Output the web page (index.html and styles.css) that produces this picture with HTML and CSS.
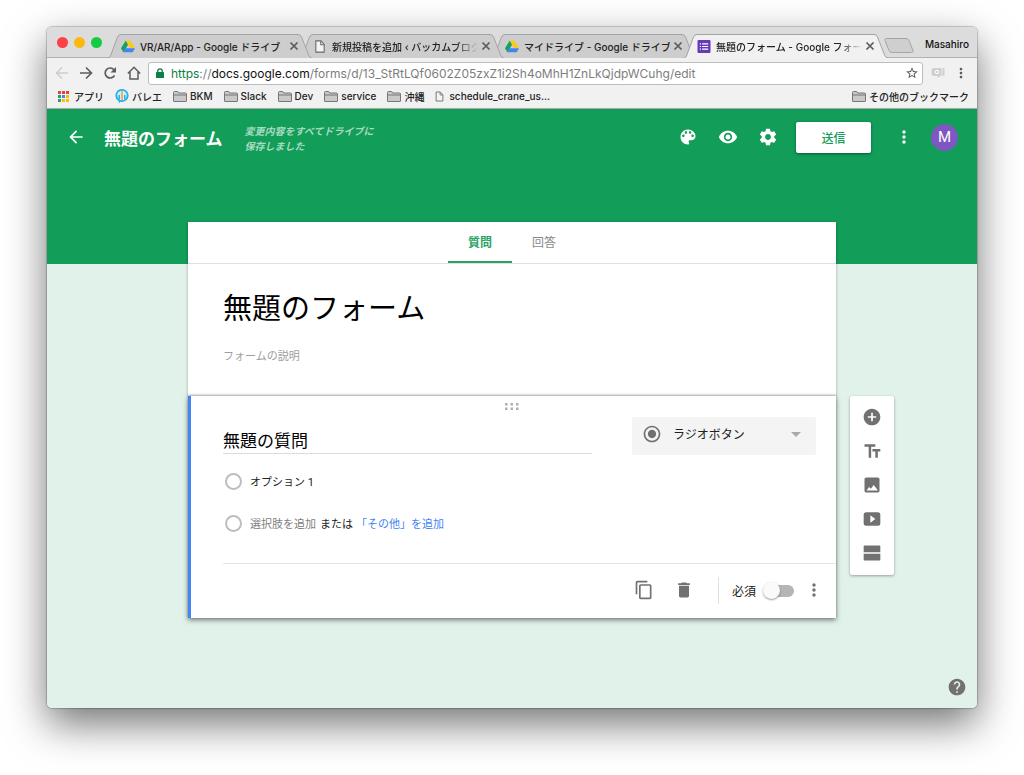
FILE: index.html
```html
<!DOCTYPE html>
<html lang="ja">
<head>
<meta charset="utf-8">
<meta name="viewport" content="width=device-width, initial-scale=1">
<title>無題のフォーム - Google フォーム</title>
<link rel="stylesheet" href="styles.css">
</head>
<body>
<svg class="defs" aria-hidden="true">
  <symbol id="drive" viewBox="0 0 24 22">
    <path fill="#ffc913" d="M8 1h8l8 13h-8z"/>
    <path fill="#17a05d" d="M8 1l4 7L4 21 0 14z"/>
    <path fill="#3f85f4" d="M8 14h16l-4 7H4z"/>
  </symbol>
  <symbol id="page" viewBox="0 0 12 14">
    <path fill="#f4f4f4" stroke="#6b6b6b" stroke-width="1.2" d="M1.5 1h5.500l3.500 3.700V13h-9z"/>
    <path fill="none" stroke="#6b6b6b" stroke-width="1.100" d="M6.800 1v4h3.700"/>
  </symbol>
  <symbol id="folder" viewBox="0 0 14 11">
    <path fill="#c9c9c9" stroke="#777" d="M.5 10V1.500q0-1 1-1h3.200l1 1.500h6.800q1 0 1 1v7q0 .5-.5.500H1q-.5 0-.5-.5z"/>
    <path stroke="#777" d="M.5 4h13"/>
  </symbol>
  <symbol id="close" viewBox="0 0 10 10">
    <path stroke="#5a5a5a" stroke-width="1.700" d="M1.500 1.500l7 7m0-7l-7 7"/>
  </symbol>
  <symbol id="more" viewBox="0 0 24 24">
    <path d="M12 8c1.100 0 2-.9 2-2s-.9-2-2-2-2 .9-2 2 .9 2 2 2zm0 2c-1.100 0-2 .9-2 2s.9 2 2 2 2-.9 2-2-.9-2-2-2zm0 6c-1.100 0-2 .9-2 2s.9 2 2 2 2-.9 2-2-.9-2-2-2z"/>
  </symbol>
  <symbol id="tab-shape" viewBox="0 0 204 24" preserveAspectRatio="none">
    <path d="M0 24Q2 23.500 2.500 22L9.500 3Q10.500.5 13 .5H190Q192.500.5 193.500 3L201 22Q202 23.500 204 24"/>
  </symbol>
</svg>

<div class="window">
  <header class="tabstrip">
    <div class="lights">
      <button class="light red" aria-label="閉じる"></button>
      <button class="light yellow" aria-label="最小化"></button>
      <button class="light green" aria-label="最大化"></button>
    </div>
    <nav class="tabs">
      <div class="tab tab-1">
        <svg class="tab-bg"><use href="#tab-shape"/></svg>
        <svg class="favicon"><use href="#drive"/></svg>
        <span class="tab-title">VR/AR/App - Google ドライブ</span>
        <button class="tab-close" aria-label="タブを閉じる"><svg><use href="#close"/></svg></button>
      </div>
      <div class="tab tab-2">
        <svg class="tab-bg"><use href="#tab-shape"/></svg>
        <svg class="favicon"><use href="#page"/></svg>
        <span class="tab-title fade">新規投稿を追加 ‹ バッカムブログ -</span>
        <button class="tab-close" aria-label="タブを閉じる"><svg><use href="#close"/></svg></button>
      </div>
      <div class="tab tab-3">
        <svg class="tab-bg"><use href="#tab-shape"/></svg>
        <svg class="favicon"><use href="#drive"/></svg>
        <span class="tab-title">マイドライブ - Google ドライブ</span>
        <button class="tab-close" aria-label="タブを閉じる"><svg><use href="#close"/></svg></button>
      </div>
      <div class="tab active">
        <svg class="tab-bg"><use href="#tab-shape"/></svg>
        <svg class="favicon" viewBox="0 0 14 14"><rect width="14" height="14" rx="1" fill="#673ab7"/><path stroke="#fff" stroke-width="1.300" d="M2.500 4.200h1.300M2.500 7h1.300M2.500 9.800h1.300M5 4.200h6.500M5 7h6.500M5 9.800h6.500"/></svg>
        <span class="tab-title fade">無題のフォーム - Google フォーム</span>
        <button class="tab-close" aria-label="タブを閉じる"><svg><use href="#close"/></svg></button>
      </div>
    </nav>
    <button class="new-tab" aria-label="新しいタブ"><svg viewBox="0 0 30 15"><path fill="#cfcfcf" stroke="#a5a5a5" d="M2.500.5H22q2 0 3 2l4 10q.5 2-1.500 2H8q-2 0-3-2L1 2.500Q.5.5 2.500.5z"/></svg></button>
    <button class="profile">Masahiro</button>
  </header>

  <div class="toolbar">
    <button class="nav-btn" aria-label="戻る"><svg viewBox="0 0 14 14"><path fill="none" stroke="#cdcdcd" stroke-width="1.500" d="M13 7H2M7 1.500L1.500 7 7 12.500"/></svg></button>
    <button class="nav-btn" aria-label="進む"><svg viewBox="0 0 14 14"><path fill="none" stroke="#5c5c5c" stroke-width="1.600" d="M1 7h11M7 1.500L12.500 7 7 12.500"/></svg></button>
    <button class="nav-btn" aria-label="再読み込み"><svg viewBox="0 0 14 14"><path fill="none" stroke="#5c5c5c" stroke-width="1.700" d="M11.500 9.500A5 5 0 1 1 11 3.800"/><path fill="#5c5c5c" d="M13 1v5.500H7.500z"/></svg></button>
    <button class="nav-btn" aria-label="ホーム"><svg viewBox="0 0 14 14"><path fill="none" stroke="#5c5c5c" stroke-width="1.500" d="M.8 7.500L7 1.300l6.200 6.200M3 6v7h8V6"/></svg></button>
    <div class="omnibox">
      <svg class="lock" viewBox="0 0 8 10"><rect y="4" width="8" height="6" rx=".6" fill="#0b8043"/><path fill="none" stroke="#0b8043" stroke-width="1.300" d="M1.800 4.500V3a2.200 2.200 0 0 1 4.400 0v1.500"/></svg>
      <div class="url"><span class="secure">https</span>://<span class="host">docs.google.com</span>/forms/d/13_StRtLQf0602Z05zxZ1i2Sh4oMhH1ZnLkQjdpWCuhg/edit</div>
      <button class="star" aria-label="ブックマーク"><svg viewBox="0 0 24 24"><path fill="#5a5a5a" d="M22 9.240l-7.190-.62L12 2 9.190 8.630 2 9.240l5.460 4.730L5.820 21 12 17.270 18.180 21l-1.630-7.030L22 9.240zM12 15.400l-3.760 2.270 1-4.280-3.320-2.880 4.380-.38L12 6.100l1.710 4.040 4.380.38-3.320 2.880 1 4.280L12 15.400z"/></svg></button>
    </div>
    <button class="ext" aria-label="拡張機能"><svg viewBox="0 0 14 12"><path fill="#d0d0d0" d="M3 1h9q1.500 0 1.500 1.500v5Q13.500 9 12 9H9l-2 2-1-2H3Q.5 9 .5 6.500v-3Q.5 1 3 1z"/><circle cx="6" cy="5" r="1.700" fill="none" stroke="#fff" stroke-width="1"/><path stroke="#f1f1f1" stroke-width=".8" d="M11 1v8"/></svg></button>
    <button class="menu" aria-label="メニュー"><svg viewBox="0 0 24 24"><use href="#more"/></svg></button>
  </div>

  <nav class="bookmarks">
    <a href="#"><svg class="apps" viewBox="0 0 11 11"><path fill="#e8443a" d="M0 0h3v3H0zM4 0h3v3H4zM8 0h3v3H8z"/><path fill="#1fa463" d="M0 4h3v3H0z"/><path fill="#4285f4" d="M4 4h3v3H4z"/><path fill="#fbbc05" d="M8 4h3v3H8zM4 8h3v3H4zM8 8h3v3H8z"/><path fill="#1fa463" d="M0 8h3v3H0z"/></svg>アプリ</a>
    <a href="#"><svg class="ballet" viewBox="0 0 14 14"><path fill="#25b0ea" d="M7 0a6.500 6.500 0 1 1-1.500 12.800L4 14l-.5-2A6.500 6.500 0 0 1 7 0z"/><circle cx="7" cy="6.500" r="4.800" fill="#d3edf8"/><path fill="#f4a340" d="M6.200 4h1.600v7H6.200z"/><path fill="#25b0ea" d="M3.500 6H5v4.500H3.500zM9 6h1.500v4.500H9z"/><circle cx="7" cy="3" r="1" fill="#f4a340"/></svg>バレエ</a>
    <a href="#"><svg class="folder"><use href="#folder"/></svg>BKM</a>
    <a href="#"><svg class="folder"><use href="#folder"/></svg>Slack</a>
    <a href="#"><svg class="folder"><use href="#folder"/></svg>Dev</a>
    <a href="#"><svg class="folder"><use href="#folder"/></svg>service</a>
    <a href="#"><svg class="folder"><use href="#folder"/></svg>沖縄</a>
    <a href="#"><svg class="file"><use href="#page"/></svg>schedule_crane_us...</a>
    <a href="#" class="other"><svg class="folder"><use href="#folder"/></svg>その他のブックマーク</a>
  </nav>

  <main class="app">
    <div class="appbar">
      <button class="icon-btn back" aria-label="戻る"><svg viewBox="0 0 24 24"><path d="M20 11H7.830l5.590-5.590L12 4l-8 8 8 8 1.410-1.410L7.830 13H20v-2z"/></svg></button>
      <h1 class="doc-name">無題のフォーム</h1>
      <p class="saved">変更内容をすべてドライブに保存しました</p>
      <div class="actions">
        <button class="icon-btn" aria-label="カラーパレット"><svg viewBox="0 0 24 24"><path d="M12 3c-4.970 0-9 4.030-9 9s4.030 9 9 9c.83 0 1.500-.67 1.500-1.500 0-.39-.15-.74-.39-1.010-.23-.26-.38-.61-.38-.99 0-.83.67-1.500 1.500-1.500H16c2.760 0 5-2.240 5-5 0-4.420-4.030-8-9-8zm-5.500 9c-.83 0-1.500-.67-1.500-1.500S5.670 9 6.500 9 8 9.670 8 10.500 7.330 12 6.500 12zm3-4C8.670 8 8 7.330 8 6.500S8.670 5 9.500 5s1.500.67 1.500 1.500S10.330 8 9.500 8zm5 0c-.83 0-1.500-.67-1.500-1.500S13.670 5 14.500 5s1.500.67 1.500 1.500S15.330 8 14.500 8zm3 4c-.83 0-1.500-.67-1.500-1.500S16.670 9 17.500 9s1.500.67 1.500 1.500-.67 1.500-1.500 1.500z"/></svg></button>
        <button class="icon-btn" aria-label="プレビュー"><svg viewBox="0 0 24 24"><path d="M12 4.500C7 4.500 2.730 7.610 1 12c1.730 4.390 6 7.500 11 7.500s9.270-3.110 11-7.500c-1.730-4.390-6-7.500-11-7.500zM12 17c-2.760 0-5-2.240-5-5s2.240-5 5-5 5 2.240 5 5-2.240 5-5 5zm0-8c-1.660 0-3 1.340-3 3s1.340 3 3 3 3-1.340 3-3-1.340-3-3-3z"/></svg></button>
        <button class="icon-btn" aria-label="設定"><svg viewBox="0 0 24 24"><path d="M19.430 12.980c.04-.32.070-.64.070-.98s-.03-.66-.07-.98l2.110-1.650c.19-.15.24-.42.120-.64l-2-3.460c-.12-.22-.39-.3-.61-.22l-2.490 1c-.52-.4-1.080-.73-1.690-.98l-.38-2.650C14.460 2.180 14.250 2 14 2h-4c-.25 0-.46.18-.49.42l-.38 2.650c-.61.25-1.170.59-1.690.98l-2.490-1c-.23-.09-.49 0-.61.22l-2 3.460c-.13.22-.07.49.12.64l2.110 1.650c-.04.32-.07.65-.07.98s.03.66.070.98l-2.110 1.650c-.19.15-.24.42-.12.64l2 3.460c.12.22.39.3.61.22l2.490-1c.52.4 1.080.73 1.690.98l.38 2.650c.03.24.24.42.49.42h4c.25 0 .46-.18.49-.42l.38-2.650c.61-.25 1.170-.59 1.690-.98l2.490 1c.23.09.49 0 .61-.22l2-3.460c.12-.22.070-.49-.12-.64l-2.110-1.650zM12 15.500c-1.930 0-3.500-1.570-3.500-3.500s1.570-3.500 3.500-3.500 3.500 1.570 3.500 3.500-1.570 3.500-3.500 3.500z"/></svg></button>
        <button class="send">送信</button>
        <button class="icon-btn" aria-label="その他"><svg><use href="#more"/></svg></button>
        <button class="avatar" aria-label="アカウント">M</button>
      </div>
    </div>

    <div class="board">
      <section class="sheet">
        <div class="sheet-tabs" role="tablist">
          <button class="sheet-tab selected" role="tab" aria-selected="true">質問</button>
          <button class="sheet-tab" role="tab" aria-selected="false">回答</button>
        </div>
        <div class="form-head">
          <input class="form-title" type="text" value="無題のフォーム" aria-label="フォームのタイトル">
          <input class="form-desc" type="text" placeholder="フォームの説明" aria-label="フォームの説明">
        </div>
      </section>

      <section class="question">
        <div class="drag"><svg viewBox="0 0 14 7"><g fill="#b0b0b0"><rect width="2.500" height="2.500"/><rect x="5.500" width="2.500" height="2.500"/><rect x="11" width="2.500" height="2.500"/><rect y="4.500" width="2.500" height="2.500"/><rect x="5.500" y="4.500" width="2.500" height="2.500"/><rect x="11" y="4.500" width="2.500" height="2.500"/></g></svg></div>
        <div class="question-body">
          <div class="question-top">
            <input class="question-title" type="text" value="無題の質問" aria-label="質問">
            <label class="type">
              <svg class="type-icon" viewBox="0 0 24 24"><path d="M12 7c-2.760 0-5 2.240-5 5s2.240 5 5 5 5-2.240 5-5-2.240-5-5-5zm0-5C6.480 2 2 6.480 2 12s4.480 10 10 10 10-4.480 10-10S17.520 2 12 2zm0 18c-4.420 0-8-3.580-8-8s3.580-8 8-8 8 3.580 8 8-3.580 8-8 8z"/></svg>
              <select aria-label="質問の形式"><option>ラジオボタン</option></select>
              <svg class="caret" viewBox="0 0 10 5"><path d="M0 0h10L5 5z"/></svg>
            </label>
          </div>
          <div class="options">
            <div class="option">
              <input type="radio" name="choice" id="opt1" aria-label="オプション 1">
              <input class="option-text" type="text" value="オプション 1" aria-label="選択肢 1">
            </div>
            <div class="option">
              <input type="radio" name="choice" id="opt2" aria-label="選択肢を追加">
              <button class="add">選択肢を追加</button><span class="or">または</span><button class="add-other">「その他」を追加</button>
            </div>
          </div>
        </div>
        <footer class="question-foot">
          <button class="icon-btn" aria-label="コピーを作成"><svg viewBox="0 0 24 24"><path d="M16 1H4c-1.100 0-2 .9-2 2v14h2V3h12V1zm3 4H8c-1.100 0-2 .9-2 2v14c0 1.100.9 2 2 2h11c1.100 0 2-.9 2-2V7c0-1.100-.9-2-2-2zm0 16H8V7h11v14z"/></svg></button>
          <button class="icon-btn trash" aria-label="削除"><svg viewBox="0 0 24 24"><path d="M6 19c0 1.100.9 2 2 2h8c1.100 0 2-.9 2-2V7H6v12zM19 4h-3.500l-1-1h-5l-1 1H5v2h14V4z"/></svg></button>
          <label class="required"><span>必須</span><input type="checkbox" class="toggle"></label>
          <button class="icon-btn foot-more" aria-label="その他のオプション"><svg><use href="#more"/></svg></button>
        </footer>
      </section>

      <aside class="side">
        <button class="icon-btn" aria-label="質問を追加"><svg viewBox="0 0 24 24"><path d="M12 2C6.480 2 2 6.480 2 12s4.480 10 10 10 10-4.480 10-10S17.520 2 12 2zm5 11h-4v4h-2v-4H7v-2h4V7h2v4h4v2z"/></svg></button>
        <button class="icon-btn" aria-label="タイトルと説明を追加"><svg viewBox="0 0 24 24"><path d="M3 4v3h5v13h3V7h5V4zM12.500 9.500v3H16V20h3v-7.500h3v-3z"/></svg></button>
        <button class="icon-btn" aria-label="画像を追加"><svg viewBox="0 0 24 24"><path d="M21 19V5c0-1.100-.9-2-2-2H5c-1.100 0-2 .9-2 2v14c0 1.100.9 2 2 2h14c1.100 0 2-.9 2-2zM5.500 18.500l3-4 2.200 2 3.300-4.500 2.500 3 2.500 3.500z"/></svg></button>
        <button class="icon-btn" aria-label="動画を追加"><svg viewBox="0 0 24 24"><path d="M5 4h14q3 0 3 3v10q0 3-3 3H5q-3 0-3-3V7q0-3 3-3zm5 3.500v9l6-4.500z"/></svg></button>
        <button class="icon-btn" aria-label="セクションを追加"><svg viewBox="0 0 24 24"><path d="M3 3h18q1 0 1 1v7H2V4q0-1 1-1zM2 13h20v7q0 1-1 1H3q-1 0-1-1z"/></svg></button>
      </aside>
    </div>
    <button class="icon-btn help" aria-label="ヘルプ"><svg viewBox="0 0 24 24"><path d="M12 2C6.480 2 2 6.480 2 12s4.480 10 10 10 10-4.480 10-10S17.520 2 12 2zm1 17h-2v-2h2v2zm2.070-7.750l-.9.920C13.450 12.900 13 13.500 13 15h-2v-.5c0-1.100.45-2.100 1.170-2.830l1.240-1.260c.37-.36.59-.86.59-1.410 0-1.100-.9-2-2-2s-2 .9-2 2H8c0-2.210 1.790-4 4-4s4 1.790 4 4c0 .88-.36 1.680-.93 2.250z"/></svg></button>
  </main>
</div>
</body>
</html>
```

FILE: styles.css
```css
* { box-sizing: border-box; }

body {
  margin: 0;
  min-height: 100vh;
  padding: 27px 47px 67px;
  display: flex;
  flex-direction: column;
  overflow-x: hidden;
  background: #fff;
  font-family: Inter, "Noto Sans CJK JP", sans-serif;
  font-size: 11px;
  color: #212121;
}

button, input, select { font: inherit; color: inherit; }
button { border: 0; padding: 0; background: none; display: flex; align-items: center; justify-content: center; }
input[type="text"] { border: 0; padding: 0; background: none; outline: 0; min-width: 0; }
svg { display: block; flex: none; }
.defs { position: absolute; width: 0; height: 0; }

.window {
  flex: 1;
  display: flex;
  flex-direction: column;
  border-radius: 5px;
  overflow: hidden;
  box-shadow: 0 0 1px 1px rgba(0, 0, 0, .2), 0 16px 40px rgba(0, 0, 0, .55);
}

/* Tab strip */
.tabstrip {
  display: flex;
  align-items: flex-end;
  height: 31px;
  background: #dcdcdc;
  border-bottom: 1px solid #b1b1b1;
}
.lights { display: flex; gap: 6px; padding-left: 10px; margin-right: 6px; align-self: center; }
.light { width: 11px; height: 11px; border-radius: 50%; }
.red { background: #fb4146; }
.yellow { background: #fdb912; }
.green { background: #14cc44; }
.tabs { display: flex; flex: 0 1 780px; min-width: 0; margin-bottom: -1px; }
.tab {
  position: relative;
  flex: 1 1 204px;
  min-width: 0;
  height: 24px;
  display: flex;
  align-items: center;
  padding: 0 13px;
  color: #222;
}
.tab + .tab { margin-left: -12px; }
.tab-1 { z-index: 3; }
.tab-2 { z-index: 2; }
.tab-3 { z-index: 1; }
.active { z-index: 4; }
.tab-bg { position: absolute; inset: 0; width: 100%; height: 100%; fill: #cdcdcd; stroke: #a3a3a3; }
.active .tab-bg { fill: #f1f1f1; }
.favicon { position: relative; width: 14px; height: 13px; }
.tab-title {
  position: relative;
  flex: 1;
  min-width: 0;
  margin: 0 3px 0 5px;
  font-size: 10px;
  font-weight: 500;
  font-variant-east-asian: proportional-width;
  white-space: nowrap;
  overflow: hidden;
}
.fade { mask-image: linear-gradient(to right, #000 84%, transparent); }
.tab-close { position: relative; }
.tab-close svg { width: 10px; height: 10px; }
.new-tab { align-self: center; margin: 9px 7px 3px -4px; }
.new-tab svg { width: 30px; height: 15px; }
.profile { align-self: center; margin: 3px 8px 0 auto; font-size: 10px; font-weight: 500; color: #111; }

/* Toolbar */
.toolbar { display: flex; align-items: center; height: 28px; padding: 2px 8px 0; background: #f1f1f1; }
.nav-btn { width: 24px; height: 24px; padding-right: 10px; flex: none; }
.nav-btn svg { width: 14px; height: 14px; }
.omnibox {
  flex: 1;
  min-width: 0;
  height: 23px;
  margin: 0 8px 0 -3px;
  padding: 0 3px 0 7px;
  display: flex;
  align-items: center;
  background: #fff;
  border: 1px solid #bdbdbd;
  border-radius: 3px;
}
.lock { width: 8px; height: 10px; margin-right: 7px; }
.url { flex: 1; min-width: 0; overflow: hidden; white-space: nowrap; font-size: 12px; color: #7d7d7d; }
.secure { color: #0b8043; }
.host { color: #111; }
.star svg { width: 14px; height: 14px; }
.ext svg { width: 14px; height: 12px; }
.menu { margin-left: 8px; fill: #5a5a5a; }
.menu svg { width: 16px; height: 16px; }

.bookmarks {
  display: flex;
  align-items: center;
  gap: 11px;
  height: 23px;
  padding: 0 8px 2px 11px;
  background: #f1f1f1;
  border-bottom: 1px solid #a9a9a9;
  font-size: 10px;
  font-weight: 500;
  font-variant-east-asian: proportional-width;
  white-space: nowrap;
}
.bookmarks a { display: flex; align-items: center; gap: 3px; color: #222; text-decoration: none; }
.apps { width: 11px; height: 11px; margin-right: 2px; }
.ballet { width: 14px; height: 14px; }
.folder { width: 14px; height: 11px; }
.file { width: 9px; height: 11px; margin-right: 2px; }
.bookmarks .other { margin-left: auto; }

/* Form editor */
.app {
  position: relative;
  flex: 1;
  background: linear-gradient(#129d59 155px, #e1f2ea 155px);
  font-family: Roboto, "Noto Sans CJK JP", sans-serif;
}
.icon-btn { fill: #717171; flex: none; }
.icon-btn svg { width: 20px; height: 20px; }
.appbar { display: flex; align-items: center; height: 56px; padding: 0 19px; margin-bottom: 57px; }
.appbar .icon-btn { fill: #fff; }
.doc-name { margin: 0 22px 0 18px; font-size: 17px; font-weight: 700; color: #fff; white-space: nowrap; }
.saved { width: 133px; margin: 4px 0 0; font-size: 10px; line-height: 15px; font-weight: 700; font-style: italic; color: #a6dac1; }
.actions { display: flex; align-items: center; gap: 20px; margin-left: auto; }
.send {
  width: 75px;
  height: 31px;
  margin: 0 3px 0 -2px;
  border-radius: 2px;
  background: #fff;
  color: #129d59;
  font-size: 12px;
  font-weight: 500;
  box-shadow: 0 1px 3px rgba(0, 0, 0, .45);
}
.avatar { width: 27px; height: 27px; margin-left: -3px; border-radius: 50%; background: #7e57c2; color: #fff; font-size: 15px; }

.board { display: grid; grid-template-columns: 1fr minmax(0, 648px) 1fr; }
.sheet { grid-column: 2; background: #fff; box-shadow: 0 1px 3px rgba(0, 0, 0, .3); }
.sheet-tabs { display: flex; justify-content: center; height: 42px; border-bottom: 1px solid #e0e0e0; }
.sheet-tab { width: 64px; border-bottom: 2px solid transparent; font-size: 12px; color: #8a8a8a; }
.selected { border-color: #28a366; color: #28a366; font-weight: 700; }
.form-head { display: flex; flex-direction: column; height: 132px; padding: 20px 35px 0; }
.form-title { height: 44px; font-size: 29px; color: #000; }
.form-desc { height: 20px; margin-top: 18px; font-size: 11px; }
.form-desc::placeholder { color: #9e9e9e; opacity: 1; }

.question {
  grid-column: 2;
  background: #fff;
  border-left: 3px solid #4285f4;
  box-shadow: 0 -1px 2px rgba(0, 0, 0, .25), 0 2px 5px rgba(0, 0, 0, .5);
}
.drag { display: flex; justify-content: center; height: 21px; padding: 7px 3px 0 0; }
.drag svg { width: 14px; height: 7px; }
.question-body { padding: 0 20px 19px 32px; }
.question-top { display: flex; gap: 40px; margin-bottom: 5px; }
.question-top .question-title { flex: 1; height: 37px; padding-top: 9px; border-bottom: 1px solid #dcdcdc; font-size: 17px; color: #000; }
.type { position: relative; width: 184px; height: 38px; }
.type select {
  appearance: none;
  width: 100%;
  height: 100%;
  padding: 0 30px 2px 41px;
  border: 0;
  border-radius: 2px;
  background: #f4f4f4;
  font-size: 12px;
}
.type-icon { position: absolute; left: 10px; top: 7px; width: 20px; height: 20px; fill: #717171; }
.caret { position: absolute; right: 15px; top: 15px; width: 10px; height: 5px; fill: #a9a9a9; }
.option { display: flex; align-items: center; height: 42px; padding-left: 2px; }
.option input[type="radio"] { appearance: none; width: 17px; height: 17px; margin: 1px 8px 0 0; border: 2px solid #bdbdbd; border-radius: 50%; }
.option-text { flex: 1; }
.add { color: #808080; }
.or { margin: 0 3px 0 4px; }
.add-other { color: #4285f4; }
.question-foot {
  display: flex;
  align-items: center;
  justify-content: flex-end;
  height: 55px;
  margin-left: 32px;
  padding: 0 12px 2px 0;
  border-top: 1px solid #e5e5e5;
}
.trash { margin: 0 24px 0 20px; }
.required { display: flex; align-items: center; gap: 7px; height: 27px; padding-left: 13px; border-left: 1px solid #e0e0e0; font-size: 12px; }
.toggle {
  appearance: none;
  position: relative;
  width: 28px;
  height: 12px;
  margin: 2px 0 0 3px;
  border-radius: 6px;
  background: #b5b5b5;
}
.toggle::before {
  content: "";
  position: absolute;
  left: -3px;
  top: -3px;
  width: 17px;
  height: 17px;
  border-radius: 50%;
  background: #fafafa;
  box-shadow: 0 1px 2px rgba(0, 0, 0, .4);
}
.foot-more { margin-left: 10px; }

.side {
  grid-column: 3;
  justify-self: start;
  align-self: start;
  width: 44px;
  margin-left: 14px;
  padding: 11px 0 12px;
  display: flex;
  flex-direction: column;
  align-items: center;
  gap: 14px;
  background: #fff;
  border-radius: 2px;
  box-shadow: 0 1px 3px rgba(0, 0, 0, .35);
}
.help { position: absolute; right: 10px; bottom: 11px; }
```
